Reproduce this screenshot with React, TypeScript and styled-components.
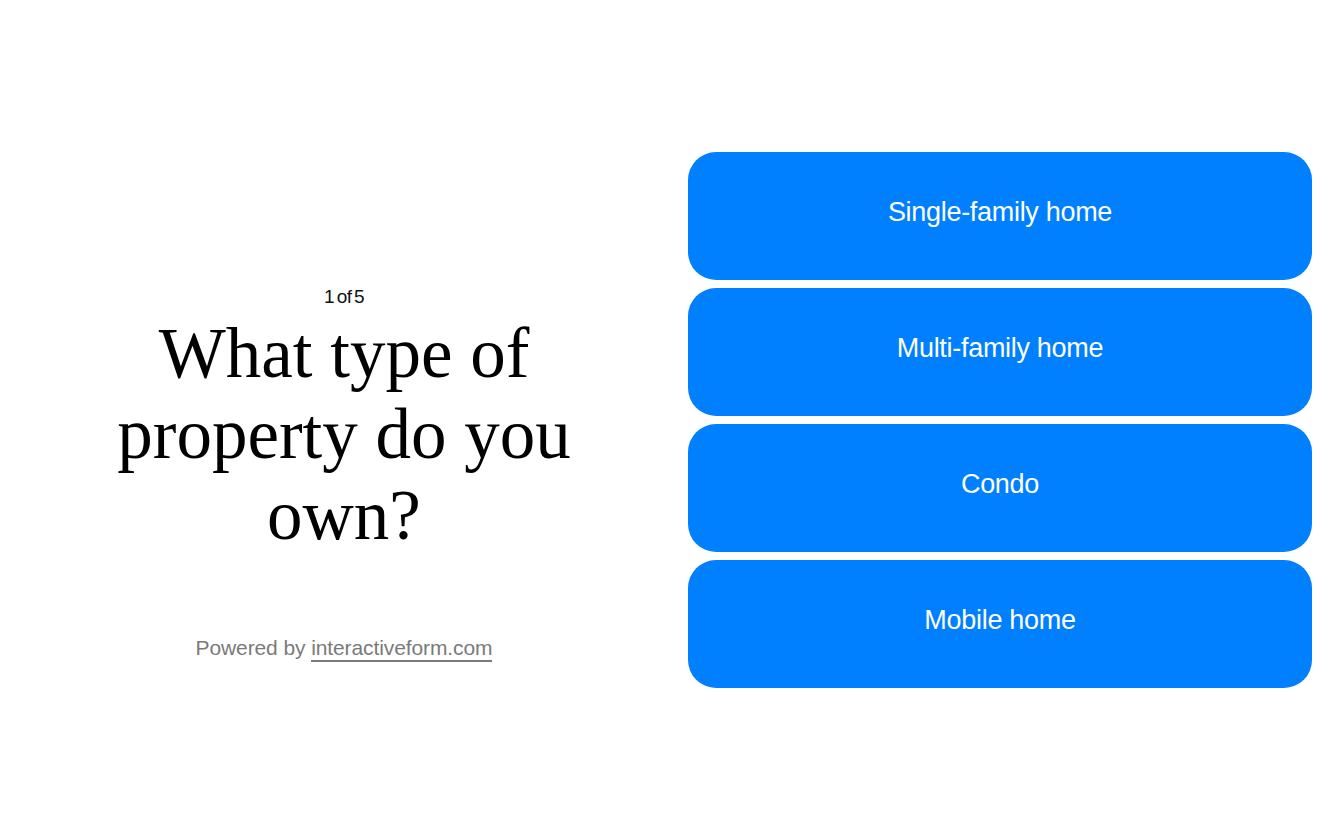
import styled, { createGlobalStyle } from 'styled-components';

const GlobalStyle = createGlobalStyle`
  html, body {
    margin: 0;
    padding: 0;
    background: #ffffff;
  }
  * {
    box-sizing: border-box;
  }
`;

const Page = styled.main`
  height: 840px;
  padding: 152px 32px;
  display: grid;
  grid-template-columns: 1fr 1fr;
  column-gap: 32px;
`;

const IntroColumn = styled.section`
  display: grid;
  grid-template-rows: 1fr auto 1fr;
  justify-items: center;
  text-align: center;
`;

const Heading = styled.div`
  grid-row: 2;
  display: flex;
  flex-direction: column;
  align-items: center;
`;

const Step = styled.div`
  font-family: 'Liberation Sans', Arial, sans-serif;
  font-size: 19px;
  letter-spacing: -0.6px;
  word-spacing: -2px;
  line-height: 20px;
  color: #111;
  padding-top: 3px;
  margin-bottom: 6px;
`;

const Question = styled.h1`
  margin: 0;
  padding: 0 12px;
  font-family: 'Liberation Serif', 'Times New Roman', serif;
  font-weight: 400;
  font-size: 71px;
  line-height: 81px;
  color: #000;
`;

const Footer = styled.div`
  grid-row: 3;
  align-self: start;
  margin-top: 80px;
  font-family: 'Liberation Sans', Arial, sans-serif;
  font-size: 21px;
  letter-spacing: -0.1px;
  color: #7a7a7a;
`;

const FooterLink = styled.a`
  color: #7a7a7a;
  text-decoration: none;
  border-bottom: 2px solid #7a7a7a;
  padding-bottom: 1px;
`;

const Choices = styled.section`
  display: flex;
  flex-direction: column;
  gap: 8px;
`;

const Choice = styled.button`
  height: 128px;
  padding: 0 0 8px;
  border: none;
  border-radius: 28px;
  background: #007fff;
  color: #ffffff;
  font-family: 'Liberation Sans', Arial, sans-serif;
  font-size: 27px;
  letter-spacing: -0.3px;
  cursor: pointer;
`;

const options = ['Single-family home', 'Multi-family home', 'Condo', 'Mobile home'];

export default function App() {
  return (
    <>
      <GlobalStyle />
      <Page>
        <IntroColumn>
          <Heading>
            <Step>1 of 5</Step>
            <Question>What type of property do you own?</Question>
          </Heading>
          <Footer>
            Powered by <FooterLink href="#">interactiveform.com</FooterLink>
          </Footer>
        </IntroColumn>
        <Choices>
          {options.map((o) => (
            <Choice key={o}>{o}</Choice>
          ))}
        </Choices>
      </Page>
    </>
  );
}
